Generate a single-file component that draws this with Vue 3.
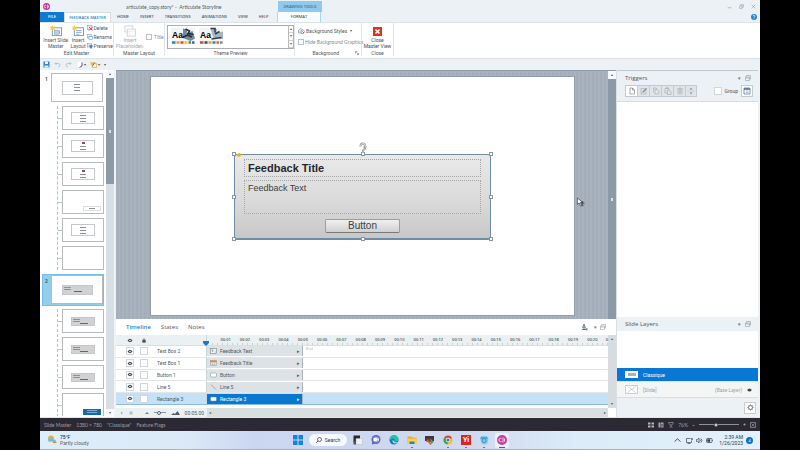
<script setup>
import { ref } from 'vue'

const menuTabs = ['HOME', 'INSERT', 'TRANSITIONS', 'ANIMATIONS', 'VIEW', 'HELP']
const masters = [
  { number: 1, selected: false, kind: 'form', layouts: ['form', 'mark', 'mark', 'corner', 'form', 'blank'] },
  { number: 2, selected: true, kind: 'grey', layouts: ['grey', 'grey', 'grey', 'blue'] },
]
const objects = [
  { name: 'Text Box 2', label: 'Feedback Text', icon: 'text' },
  { name: 'Text Box 1', label: 'Feedback Title', icon: 'title' },
  { name: 'Button 1', label: 'Button', icon: 'box' },
  { name: 'Line 5', label: 'Line 5', icon: 'line' },
  { name: 'Rectangle 3', label: 'Rectangle 3', icon: 'box', selected: true },
]
const seconds = Array.from({ length: 20 }, (_, i) => '00:' + String(i + 1).padStart(2, '0'))
const triggerTools = ['new', 'edit', 'copy', 'paste', 'delete', 'move']
const handles = ['nw', 'n', 'ne', 'w', 'e', 'sw', 's', 'se']
const hideGraphics = ref(false)
const titleOn = ref(false)
const grouped = ref(false)
const zoom = ref(42)
const scale = ref(40)
</script>

<template>
  <div class="desktop">
    <div class="app">
      <header class="top">
        <div class="titlebar">
          <svg class="logo" viewBox="0 0 14 14"><circle cx="7" cy="7" r="7" fill="#c7369b" /><path d="M6 4.500a2.600 2.600 0 1 0 0 5M9 3v8M11 5v4" fill="none" stroke="#fff" stroke-width="1.300" /></svg>
          <h1>articulate_copy.story* -&nbsp; Articulate Storyline</h1>
          <span class="tools-title">DRAWING TOOLS</span>
          <div class="window-buttons">
            <button aria-label="Minimize"><svg viewBox="0 0 8 8"><path d="M1 6h6" /></svg></button>
            <button aria-label="Restore"><svg viewBox="0 0 8 8"><path d="M1 3h4v4H1zM3 3V1h4v4H5" /></svg></button>
            <button aria-label="Close"><svg viewBox="0 0 8 8"><path d="M1 1l6 6M7 1L1 7" /></svg></button>
          </div>
        </div>
        <nav class="menu">
          <button class="file">FILE</button>
          <button class="active">FEEDBACK MASTER</button>
          <div class="menu-tabs"><button v-for="t in menuTabs" :key="t">{{ t }}</button></div>
          <button class="format">FORMAT</button>
          <button class="help" aria-label="Help"><svg viewBox="0 0 12 12"><circle cx="6" cy="6" r="6" fill="#2383d5" /><path d="M4 4.500q0-2 2-2t2 2q0 1-2 2v1M6 8.500v1.500" fill="none" stroke="#fff" stroke-width="1.300" /></svg></button>
        </nav>
      </header>

      <section class="ribbon">
        <div class="group edit">
          <div class="tools">
            <button class="big">
              <svg viewBox="0 0 28 26"><rect x="6" y="6" width="20" height="17" fill="#fff" stroke="#7b95a9" stroke-width="2" /><rect x="10" y="11" width="12" height="9" fill="#b8cfe0" stroke="#7893a8" /><path d="M6 0l2 4 4-1-2 4 2 4-4-1-2 3-1-3-4 1 2-4-2-4 4 1z" fill="#f4cc3b" /></svg>
              <span>Insert Slide<br>Master</span>
            </button>
            <button class="big">
              <svg viewBox="0 0 28 26"><rect x="6" y="6" width="20" height="17" fill="#fff" stroke="#7b95a9" stroke-width="2" /><path d="M10 12h12M10 16h12M10 20h7" stroke="#8fabc0" stroke-width="2" /><path d="M6 0l2 4 4-1-2 4 2 4-4-1-2 3-1-3-4 1 2-4-2-4 4 1z" fill="#f4cc3b" /></svg>
              <span>Insert<br>Layout</span>
            </button>
            <div class="stack">
              <button><svg viewBox="0 0 12 12"><rect x="1" y="1" width="9" height="8" fill="#e2ebf2" stroke="#7893a8" /><path d="M4 4l7 7M11 4l-7 7" stroke="#e23b35" stroke-width="2" /></svg>Delete</button>
              <button><svg viewBox="0 0 12 12"><rect x="1" y="1" width="8" height="7" fill="#e2ebf2" stroke="#7893a8" /><rect x="4" y="5" width="7" height="6" fill="#fff" stroke="#4d82b7" /></svg>Rename</button>
              <button><svg viewBox="0 0 12 12"><rect x="1" y="1" width="8" height="7" fill="#e2ebf2" stroke="#7893a8" /><path d="M5 4h6v4l-3 4-3-4z" fill="#4384c3" /></svg>Preserve</button>
            </div>
          </div>
          <h2>Edit Master</h2>
        </div>
        <div class="group placeholder">
          <div class="tools">
            <button class="big muted">
              <svg viewBox="0 0 28 26"><rect x="3" y="2" width="17" height="13" fill="#fff" stroke="#d0d4d7" stroke-width="2" /><rect x="8" y="9" width="18" height="15" fill="#fff" stroke="#d0d4d7" stroke-width="2" /><path d="M8 14h18M14 14v10" stroke="#dde0e2" /></svg>
              <span>Insert<br>Placeholder<i>▾</i></span>
            </button>
            <label class="check"><input v-model="titleOn" type="checkbox">Title</label>
          </div>
          <h2>Master Layout</h2>
        </div>
        <div class="group theme">
          <div class="gallery">
            <svg viewBox="0 0 50 38"><path d="M0 1h48v34H0z" fill="#f4f4f3" /><path d="M24 3l9 3-2 7 12-5 5 15-9 5-15-6z" fill="#7188a0" /><path d="M29 4l8 4-3 5 11 2M23 21l10-5 9 4" stroke="#232a32" stroke-width="3" fill="none" /><path d="M2 31h7" stroke="#2e88ac" stroke-width="5" /><path d="M11 31h6" stroke="#eb9c2c" stroke-width="5" /><path d="M19 31h6" stroke="#d54e35" stroke-width="5" /><path d="M27 31h6" stroke="#efc338" stroke-width="5" /><path d="M35 31h5" stroke="#538e48" stroke-width="5" /><path d="M42 31h5" stroke="#3868ac" stroke-width="5" /><text x="2" y="21" font-size="17" font-weight="700">Aa</text></svg>
            <svg viewBox="0 0 50 38"><path d="M0 1h48v34H0z" fill="#f4f4f3" /><path d="M23 3l13 1-1 8 13-3v15l-19-2z" fill="#a4b5c4" /><path d="M23 3h9v8M32 14l9-5M25 24l20-3" stroke="#353d48" stroke-width="3" fill="none" /><path d="M2 31h7" stroke="#d1493a" stroke-width="5" /><path d="M11 31h6" stroke="#374b63" stroke-width="5" /><path d="M19 31h6" stroke="#e7a43a" stroke-width="5" /><path d="M27 31h6" stroke="#3b84bb" stroke-width="5" /><path d="M35 31h5" stroke="#e0682f" stroke-width="5" /><path d="M42 31h5" stroke="#6d92b7" stroke-width="5" /><text x="2" y="21" font-size="17" font-weight="700">Aa</text></svg>
            <div class="spinner"><button aria-label="Previous themes">▴</button><button aria-label="Next themes">▾</button><button aria-label="More themes">▾</button></div>
          </div>
          <h2>Theme Preview</h2>
        </div>
        <div class="group background">
          <div class="lines">
            <button><svg viewBox="0 0 14 12"><path d="M1 4l4-3 4 3v6H1z" fill="#dde9f1" stroke="#5c7990" /><path d="M6 6l4-3 3 4-2 4H7z" fill="#fff" stroke="#4e6678" /><path d="M9 7l3 3" stroke="#318ed0" stroke-width="2" /></svg>Background Styles <i>▾</i></button>
            <label class="check"><input v-model="hideGraphics" type="checkbox">Hide Background Graphics</label>
          </div>
          <h2>Background <svg class="corner" viewBox="0 0 8 8"><path d="M1 5V1h4M3 3l4 4M7 4v3H4" fill="none" stroke="#555" /></svg></h2>
        </div>
        <div class="group close">
          <button class="big">
            <svg viewBox="0 0 18 18"><rect width="18" height="18" fill="#dc3417" /><path d="M5 5l8 8M13 5l-8 8" stroke="#fff" stroke-width="3" /></svg>
            <span>Close<br>Master View</span>
          </button>
          <h2>Close</h2>
        </div>
      </section>

      <div class="quick">
        <button aria-label="Save"><svg viewBox="0 0 14 14"><path d="M1 1h12v12H1z" fill="#2c83cb" /><path d="M4 1h6v5H4zM3 9h8v4H3z" fill="#e9f3fa" /></svg></button>
        <button aria-label="Undo"><svg viewBox="0 0 14 14"><path d="M5 2L2 5l3 3M2 5h6q4 0 4 3.500T8 12" fill="none" stroke="#aeb9c1" stroke-width="1.500" /></svg></button>
        <button aria-label="Redo"><svg viewBox="0 0 14 14"><path d="M9 2l3 3-3 3M12 5H6Q2 5 2 8.500T6 12" fill="none" stroke="#aeb9c1" stroke-width="1.500" /></svg></button>
        <button aria-label="Preview"><svg viewBox="0 0 14 14"><path d="M3 2h8v10H3z" fill="#fff" /><path d="M12 3v7l-5 3" fill="none" stroke="#52606a" stroke-width="2" /></svg></button>
        <i>▾</i>
        <button aria-label="Format"><svg viewBox="0 0 14 14"><path d="M1 2h8v6H1z" fill="#f5c64e" /><path d="M5 5h8v8H5z" fill="#fff4cd" stroke="#b99539" /><path d="M4 11l6-8" stroke="#5888b3" stroke-width="2" /></svg></button>
        <i>▾</i><i class="more">▾</i>
      </div>

      <main class="workspace">
        <aside class="masters">
          <div class="thumbs">
            <section v-for="m in masters" :key="m.number" class="master" :class="{ selected: m.selected }">
              <button class="lead" :aria-label="'Slide master ' + m.number">
                <b>{{ m.number }}</b>
                <span class="thumb wide"><span class="mini" :class="m.kind"><i></i><i></i><i></i></span></span>
              </button>
              <div class="layouts">
                <button v-for="(kind, i) in m.layouts" :key="i" class="thumb" :aria-label="'Layout ' + (i + 1)">
                  <span class="mini" :class="kind"><i></i><i></i><i></i></span>
                </button>
              </div>
            </section>
          </div>
          <div class="rail"><button aria-label="Scroll up">▴</button><span class="grip"><i></i></span><span class="track"></span><button aria-label="Scroll down">▾</button></div>
        </aside>

        <div class="center">
          <div class="stage">
            <div class="backdrop">
              <div class="slide">
                <div class="card">
                  <h3 class="field">Feedback Title</h3>
                  <p class="field">Feedback Text</p>
                  <button>Button</button>
                  <span v-for="h in handles" :key="h" class="handle" :class="h"></span>
                  <span class="adjust"></span>
                  <svg class="rotate" viewBox="0 0 16 22"><path d="M8 22v-5q5-3 5-8Q12 4 8 3 3 3 3 9" fill="none" stroke="#858b90" stroke-width="4" /><path d="M8 22v-5q5-3 5-8Q12 4 8 3 3 3 3 9" fill="none" stroke="#fff" stroke-width="1.500" /><path d="M8 10h4v4" fill="none" stroke="#858b90" stroke-width="1.500" /></svg>
                </div>
              </div>
              <svg class="cursor" viewBox="0 0 20 22"><path d="M3 1v14l4-3 3 7 3-1-3-7h5z" fill="#fff" stroke="#30363c" stroke-width="1.500" /><path d="M10 13h9M14.500 9v9M12 11l2.500-3 2.500 3M12 16l2.500 3 2.500-3" stroke="#30363c" fill="none" stroke-width="1.300" /></svg>
            </div>
            <div class="stage-rail"><button aria-label="Scroll slide up">▴</button><span><i></i></span></div>
          </div>

          <section class="timeline">
            <div class="panel-tabs">
              <button class="on">Timeline</button><button>States</button><button>Notes</button>
              <svg class="figure" viewBox="0 0 14 14"><circle cx="6" cy="2" r="2" fill="#60727f" /><path d="M6 4v7M2 6h8M2 11h9" stroke="#60727f" stroke-width="2" /><path d="M9 8h4v5H9z" fill="#8797a2" /></svg>
              <span class="drop">▾</span>
              <svg class="dock" viewBox="0 0 12 12"><path d="M1 4h8v7H1zM3 4V1h8v7H9M1 6h8" fill="none" stroke="#84909a" /></svg>
            </div>
            <div class="tracks">
              <div class="scale">
                <div class="names head">
                  <span class="cell-box"><svg viewBox="0 0 12 10"><path d="M1 5q5-7 10 0-5 7-10 0z" fill="#42484d" /><circle cx="6" cy="5" r="1.500" fill="#fff" /></svg></span>
                  <span class="cell-box"><svg viewBox="0 0 12 12"><path d="M2 5h8v6H2z" fill="#42484d" /><path d="M4 6V3q2-3 4 0v3" fill="none" stroke="#42484d" stroke-width="1.500" /></svg></span>
                </div>
                <div class="ruler">
                  <svg class="playhead" viewBox="0 0 12 10"><path d="M0 0h12v4L6 10 0 4z" fill="#1878cc" /></svg>
                  <span v-for="s in seconds" :key="s">{{ s }}</span><span class="last">0</span>
                </div>
              </div>
              <div class="rows">
                <div v-for="o in objects" :key="o.name" class="row" :class="{ picked: o.selected }">
                  <div class="names">
                    <button class="cell-box" :aria-label="'Show ' + o.name"><svg viewBox="0 0 12 10"><path d="M1 5q5-7 10 0-5 7-10 0z" fill="#42484d" /><circle cx="6" cy="5" r="1.500" fill="#fff" /></svg></button>
                    <input type="checkbox" class="cell-box" :aria-label="'Lock ' + o.name">
                    <span class="object">{{ o.name }}</span>
                  </div>
                  <div class="lane">
                    <div class="bar">
                      <svg viewBox="0 0 14 12">
                        <g v-if="o.icon === 'text'" fill="none" stroke="#67727a"><rect x="1" y="1" width="12" height="10" fill="#eef2f5" /><path d="M3 4h4M5 4v4M9 8h2" /></g>
                        <g v-else-if="o.icon === 'title'"><rect x="1" y="1" width="12" height="10" fill="#fff" stroke="#7d8c98" /><path d="M1 1h12v4H1z" fill="#df8a37" /><path d="M3 7h3M8 7h3M3 9h8" stroke="#6788a3" /></g>
                        <rect v-else-if="o.icon === 'box'" x="1" y="2" width="12" height="8" rx="2" fill="#fff" stroke="#6589a3" />
                        <path v-else d="M2 1l10 10" stroke="#5f6b74" />
                      </svg>
                      <span>{{ o.label }}</span><i>▸</i>
                    </div>
                    <small v-if="o.icon === 'text'">End</small>
                  </div>
                </div>
              </div>
              <div class="v-rail"><button aria-label="Scroll timeline up">▴</button><button aria-label="Scroll timeline down">▾</button></div>
            </div>
            <div class="transport">
              <div class="controls">
                <button aria-label="Play"><svg viewBox="0 0 8 8"><path d="M2 1l4 3-4 3z" fill="#a7b0b6" /></svg></button>
                <button aria-label="Stop"><svg viewBox="0 0 8 8"><path d="M1 1h6v6H1z" fill="#b7bec3" /></svg></button>
                <svg class="hill" viewBox="0 0 12 8"><path d="M0 8l6-5 6 5z" fill="#515a61" /></svg>
                <input v-model="scale" type="range" aria-label="Timeline scale">
                <svg class="hill tall" viewBox="0 0 18 8"><path d="M0 8l5-4 3 2 5-6 5 8z" fill="#515a61" /></svg>
                <time>00:05.00</time>
              </div>
              <div class="h-rail"><button aria-label="Scroll left">◂</button><button aria-label="Scroll right">▸</button></div>
              <span class="joint"></span>
            </div>
          </section>
        </div>

        <aside class="inspector">
          <div class="triggers-head">
            <div class="panel-title"><h2>Triggers</h2><span class="drop">▾</span><svg class="dock" viewBox="0 0 12 12"><path d="M1 4h8v7H1zM3 4V1h8v7H9M1 6h8" fill="none" stroke="#84909a" /></svg></div>
            <div class="trigger-bar">
              <div class="button-set">
                <button v-for="t in triggerTools" :key="t" :class="t" :aria-label="t + ' trigger'">
                  <svg viewBox="0 0 16 16">
                    <path v-if="t === 'new'" d="M4 2h5l4 4v8H4zM9 2v4h4" />
                    <g v-else-if="t === 'edit'"><path d="M9 3H2v11h10V8" /><path d="M5 11l1-3 6-6 2 2-6 6z" fill="#8d969c" /></g>
                    <path v-else-if="t === 'copy'" d="M3 11V2h5l2 2M6 5h4l4 3v6H6z" />
                    <path v-else-if="t === 'paste'" d="M6 12H2V3h8v2M5 3V1h3v2M7 6h3l4 3v6H7z" />
                    <path v-else-if="t === 'delete'" d="M2 4h12M4 4v10h8V4M6 4V2h4v2M7 6v6M9 6v6" />
                    <g v-else fill="#8d969c" stroke="none"><path d="M8 1l3 4H5zM8 15l3-4H5z" /><path d="M0 8h16" stroke="#b4bcc1" /></g>
                  </svg>
                </button>
              </div>
              <label class="check group-check"><input v-model="grouped" type="checkbox">Group</label>
              <button class="variables" aria-label="Variables"><svg viewBox="0 0 16 16"><path d="M2 2h12v12H2z" fill="#fff" stroke="#53779a" stroke-width="1.500" /><path d="M2 4h12" stroke="#3d6793" stroke-width="3" /><path d="M6 8h5M6 11h5" stroke="#53779a" /></svg></button>
            </div>
          </div>
          <div class="trigger-list"></div>
          <div class="panel-title layers-title"><h2>Slide Layers</h2><span class="drop">▾</span><svg class="dock" viewBox="0 0 12 12"><path d="M1 4h8v7H1zM3 4V1h8v7H9M1 6h8" fill="none" stroke="#84909a" /></svg></div>
          <div class="layer-list">
            <button class="layer current"><span class="layer-thumb"><i></i></span>Classique</button>
            <button class="layer base"><svg class="cross" viewBox="0 0 26 18"><path d="M1 1h24v16H1zM5 3l16 12M21 3L5 15" fill="#fff" stroke="#9da3a7" /></svg>[Slide]<em>(Base Layer)</em><svg class="eye" viewBox="0 0 12 10"><path d="M0 5q6-8 12 0-6 8-12 0z" fill="#3e4449" /></svg></button>
          </div>
          <div class="layer-foot"><button aria-label="Layer settings"><svg viewBox="0 0 14 14"><circle cx="7" cy="7" r="4" fill="none" stroke="#6b747a" stroke-width="2" /><path d="M7 1v2M7 11v2M1 7h2M11 7h2M3 3l1 1M10 10l1 1M11 3l-1 1M4 10l-1 1" stroke="#6b747a" stroke-width="2" /></svg></button></div>
        </aside>
      </main>

      <footer class="status">
        <span>Slide Master</span><span>1380 × 780</span><span>"Classique"</span><span>Feature Flags</span>
        <div class="view-tools">
          <svg viewBox="0 0 12 12"><path d="M0 1h5v4H0zM7 1h5v4H7zM0 7h5v4H0zM7 7h5v4H7z" fill="#b7b5bb" /></svg>
          <svg viewBox="0 0 12 12"><path d="M1 1h4v10H1zM6 1h5v10H6z" fill="#a7a5ac" /><path d="M7 4h2v5H7z" fill="#33303a" /></svg>
          <svg viewBox="0 0 12 12"><path d="M1 1h10L8 6H4zM6 6v4M3 10h6" fill="none" stroke="#908d97" stroke-width="1.500" /></svg>
          <span>76%</span>
          <button aria-label="Zoom out">−</button>
          <input v-model="zoom" type="range" aria-label="Zoom">
          <button aria-label="Zoom in">+</button>
          <svg viewBox="0 0 12 12"><path d="M1 1h10v10H1zM3 3l6 6M9 3L3 9" fill="none" stroke="#918e98" stroke-width="1.500" /></svg>
        </div>
      </footer>

      <footer class="taskbar">
        <div class="weather">
          <svg viewBox="0 0 20 20"><circle cx="8" cy="7" r="6" fill="#f1aa31" /><path d="M2 12q-2-4 3-5 5-4 8 2 6-1 5 4H4z" fill="#75bddf" /><path d="M11 14h8M12 14q1-4 4-1 4-1 3 3h-8z" fill="#ed8a3a" /></svg>
          <p><b>75°F</b><br>Partly cloudy</p>
        </div>
        <div class="launch">
          <button aria-label="Start"><svg viewBox="0 0 20 20"><path d="M0 0h9v9H0zM11 0h9v9h-9zM0 11h9v9H0zM11 11h9v9h-9z" fill="#1286d4" /></svg></button>
          <button class="search"><svg viewBox="0 0 12 12"><circle cx="7" cy="5" r="4" fill="none" stroke="#303942" stroke-width="1.500" /><path d="M4 8l-4 4" stroke="#303942" stroke-width="1.500" /></svg>Search</button>
          <button aria-label="Task view"><svg viewBox="0 0 20 20"><path d="M1 1h13v13H1z" fill="#28282d" /><path d="M6 7h13v12H6z" fill="#edf0f3" stroke="#b3bbc4" /><path d="M1 12h5v7H1z" fill="#505057" /></svg></button>
          <button aria-label="Chat"><svg viewBox="0 0 20 20"><circle cx="10" cy="9" r="9" fill="#5969c2" /><path d="M2 13v6l6-2" fill="#5969c2" /><circle cx="10" cy="9" r="6" fill="#b79fd0" /><rect x="5" y="6" width="7" height="6" rx="2" fill="#fff" /><path d="M12 8l4-2v6l-4-2z" fill="#f3dfee" /></svg></button>
          <button aria-label="Edge"><svg viewBox="0 0 20 20"><circle cx="10" cy="10" r="9" fill="#177abd" /><path d="M1 9a9 9 0 0 1 18 0q0 4-5 4-3 0-3-2 1-5-4-4-4 1-6 5z" fill="#28c1a2" /><path d="M7 10q-1 7 7 7 3 0 4-3-7 2-8-2z" fill="#a4e3f0" /></svg></button>
          <button class="open" aria-label="File Explorer"><svg viewBox="0 0 20 20"><path d="M1 3h7l2 2h9v13H1z" fill="#e7a926" /><path d="M1 7h18v11H1z" fill="#ffd04b" /><path d="M5 13h10v5H5z" fill="#2b81c0" /></svg></button>
          <button aria-label="Utility"><svg viewBox="0 0 20 20"><path d="M0 2h18v10H0z" fill="#373a3b" /><path d="M3 7h12v7H3z" fill="#913430" /><path d="M11 8l7 6-7 5z" fill="#39ae53" /><path d="M4 10l8 9" stroke="#e25b45" stroke-width="3" /></svg></button>
          <button class="open" aria-label="Chrome"><svg viewBox="0 0 20 20"><circle cx="10" cy="10" r="9" fill="#efbd31" /><path d="M10 10L2 6a9 9 0 0 1 16 0z" fill="#dc483b" /><path d="M10 10L2 6a9 9 0 0 0 7 13z" fill="#38a357" /><circle cx="10" cy="10" r="4.500" fill="#fff" /><circle cx="10" cy="10" r="3.200" fill="#3378cf" /></svg></button>
          <button class="open" aria-label="Yi"><span class="yi">Yi</span></button>
          <button class="open" aria-label="Recycle"><svg viewBox="0 0 20 20"><path d="M5 2h10l4 4-2 11q-7 4-12 0L2 6z" fill="#7dcaec" /><path d="M3 6h14" stroke="#278bc4" stroke-width="2" /><circle cx="10" cy="11" r="4" fill="none" stroke="#3b94c5" stroke-width="2" /></svg></button>
          <button class="running" aria-label="Storyline"><svg viewBox="0 0 20 20"><circle cx="10" cy="10" r="10" fill="#c83d9c" /><path d="M9 7a3.500 3.500 0 1 0 0 6M12 5v10M15 7v6" fill="none" stroke="#fff" stroke-width="1.500" /></svg></button>
        </div>
        <div class="tray">
          <svg viewBox="0 0 12 12"><path d="M1 8l5-5 5 5" fill="none" stroke="#303942" stroke-width="1.500" /></svg>
          <svg class="display" viewBox="0 0 14 12"><path d="M9 2H1v8h10V6M3 12h6" fill="none" stroke="#303942" stroke-width="1.300" /><circle cx="12" cy="3" r="2" fill="#596777" /></svg>
          <svg viewBox="0 0 14 12"><path d="M1 4h2l3-3v10L3 8H1zM8 4q2 2 0 4M10 2q4 4 0 8" fill="none" stroke="#303942" stroke-width="1.300" /></svg>
          <svg viewBox="0 0 14 12"><rect x="1" y="2" width="11" height="8" rx="2" fill="#fff" stroke="#303942" stroke-width="1.500" /><path d="M3 4h5v4H3zM13 5v2" fill="#303942" stroke="#303942" /></svg>
          <time>2:39 AM<br>1/26/2023</time><span class="badge">4</span>
        </div>
      </footer>
    </div>
  </div>
</template>

<style>
body { margin: 0; background: #000; }
</style>

<style scoped>
.desktop, .desktop * { box-sizing: border-box; }
.desktop { min-height: 100vh; padding: 0 40px 1px; display: flex; background: #000; font: 5px/6px Roboto, "Open Sans", sans-serif; color: #505960; }
.app { flex: 1; min-width: 0; display: flex; flex-direction: column; background: #ebf1f4; }
h1, h2, h3, p { margin: 0; font-size: inherit; font-weight: 400; }
button, input { margin: 0; padding: 0; border: 0; background: none; color: inherit; font: inherit; }
button { display: flex; align-items: center; justify-content: center; }
svg { display: block; flex: none; }
i { font-style: normal; }

.titlebar { display: flex; height: 12px; align-items: center; padding: 1px 0 0 3px; }
.logo { width: 7px; height: 7px; }
.titlebar h1 { width: 90px; margin-left: 76px; font: 5px/6px Lato, sans-serif; white-space: nowrap; }
.tools-title { align-self: flex-end; width: 44px; height: 11px; margin-left: 62px; background: #8fc9ee; color: #3d718f; font: 600 4px/12px "Open Sans", sans-serif; text-align: center; }
.window-buttons { display: flex; gap: 7px; margin-left: auto; padding-right: 4px; }
.window-buttons svg { width: 5px; height: 5px; fill: none; stroke: #98a1a7; }
.menu { display: flex; height: 10px; font: 600 4px/6px "Open Sans", sans-serif; }
.menu button { padding: 0 5px; white-space: nowrap; }
.menu-tabs { display: flex; gap: 1px; padding-left: 1px; }
.menu .file { width: 24px; background: #0d7ad0; color: #fff; }
.menu .active { width: 47px; padding: 0; background: #fff; border: 1px solid #d3dce1; border-bottom: 0; color: #1c7fc7; }
.menu .format { width: 44px; margin-left: auto; background: #f8fcfe; border: solid #acd6ef; border-width: 0 1px; }
.menu .help { width: 12px; margin-left: 427px; padding: 0; }
.menu .help svg { width: 6px; height: 6px; }

.ribbon { display: flex; height: 37px; background: #fff; border: solid #dce3e7; border-width: 1px 0; padding: 0 0 2px; }
.group { display: flex; flex-direction: column; justify-content: space-between; padding-top: 2px; border-right: 1px solid #e2e6e9; }
.group h2 { text-align: center; line-height: 6px; }
.edit { width: 74px; }
.placeholder { width: 51px; }
.theme { width: 130px; padding-left: 2px; }
.background { width: 67px; }
.close { width: 32px; }
.tools { display: flex; }
.big { flex-direction: column; text-align: center; white-space: nowrap; }
.edit .big:first-child { width: 32px; }
.edit .big { width: 13px; }
.big svg { width: 14px; height: 12px; }
.big.muted { width: 32px; color: #a2a8ac; }
.big i { font-size: 3px; line-height: 3px; }
.close .big svg { width: 9px; height: 9px; margin: 2px 0 1px; }
.close .big { color: #454b50; }
.stack { display: flex; flex-direction: column; gap: 3px; padding-left: 2px; }
.stack button { justify-content: flex-start; gap: 1px; height: 6px; }
.stack svg { width: 6px; height: 6px; }
.check { display: flex; align-items: center; gap: 2px; white-space: nowrap; color: #858d93; }
.check input { appearance: none; flex: none; width: 6px; height: 6px; border: 1px solid #b8c0c5; background: #fff; }
.gallery { display: flex; height: 24px; padding: 1px 0 0 3px; gap: 3px; border: 1px solid #a9adb0; }
.gallery > svg { width: 25px; height: 19px; font-family: "Liberation Sans", sans-serif; }
.spinner { display: flex; flex-direction: column; width: 5px; margin: -1px 0 0 auto; border-left: 1px solid #b6babd; }
.spinner button { flex: 1; border-bottom: 1px solid #d0d3d5; font-size: 4px; }
.lines { display: flex; flex-direction: column; gap: 5px; padding: 3px 0 0 3px; }
.lines button { justify-content: flex-start; gap: 1px; height: 6px; white-space: nowrap; }
.lines button svg { width: 7px; height: 6px; }
.lines button i { margin-left: 2px; font-size: 4px; }
.lines .check { gap: 1px; font-family: Lato, sans-serif; }
.background h2 { display: flex; justify-content: flex-end; gap: 16px; padding-right: 2px; }
.corner { width: 4px; height: 4px; align-self: center; }

.quick { height: 11px; display: flex; align-items: center; gap: 4px; padding-left: 3px; }
.quick svg { width: 7px; height: 7px; }
.quick i { margin-left: -3px; font-size: 4px; }
.quick .more { margin-left: 0; }

.workspace { flex: 1; min-height: 347px; display: flex; border-bottom: 1px solid #e1e7e9; }
.masters { width: 76px; display: flex; background: #fff; overflow: hidden; border-right: 2px solid #eff3f5; }
.thumbs { flex: 1; height: 346px; overflow: hidden; }
.master { padding: 0 2px 0 2px; }
.lead { width: 62px; height: 33px; align-items: flex-start; justify-content: flex-end; padding: 3px 1px 0 3px; }
.lead b { flex: 1; padding-top: 3px; text-align: left; }
.selected .lead { padding-top: 1px; background: #93ceef; outline: 1px solid #78bde5; outline-offset: -1px; height: 32px; }
.thumb { display: flex; align-items: center; justify-content: center; width: 42px; height: 24px; background: #fff; border: 1px solid #b5babd; position: relative; }
.thumb.wide { width: 52px; height: 29px; }
.layouts { display: flex; flex-direction: column; gap: 4px; margin: 3px 0 0 15px; padding-left: 4px; border-left: 1px dashed #b9bec1; }
.layouts .thumb::before { content: ""; position: absolute; left: -5px; top: 11px; width: 4px; border-top: 1px dashed #c0c4c7; }
.master + .master { margin-top: 4px; }
.mini { display: flex; flex-direction: column; align-items: center; justify-content: center; gap: 2px; width: 24px; height: 12px; border: 1px solid #c4c7c9; }
.mini i { width: 6px; height: 1px; background: #8d9194; }
.wide .mini { width: 31px; height: 14px; }
.mini.mark i:first-child { width: 3px; height: 2px; background: #80525b; }
.mini.corner { width: 18px; height: 5px; margin: 12px 0 0 18px; border-color: #ddd; }
.mini.corner i:not(:first-child), .mini.blank i { display: none; }
.mini.blank { border: 0; }
.mini.grey { height: 9px; align-items: flex-start; gap: 1px; padding-left: 1px; background: #d0d2d3; }
.mini.grey i { width: 7px; }
.mini.grey i:last-child { width: 8px; align-self: center; background: #63686b; }
.wide .mini.grey { height: 10px; }
.mini.blue { width: 18px; height: 6px; gap: 1px; margin: 13px 0 0 18px; background: #1869ac; border: 0; }
.mini.blue i { background: #75aed9; width: 10px; }
.mini.blue i:last-child { display: none; }
.rail { width: 8px; display: flex; flex-direction: column; background: #d7dfe5; }
.rail button { height: 8px; background: #f9fafb; font-size: 4px; }
.grip { height: 106px; background: #8a9aa6; display: grid; place-items: center; }
.grip i, .stage-rail i { width: 2px; height: 3px; background: #dce3e7; }
.track { flex: 1; }

.center { flex: 1; min-width: 0; display: flex; flex-direction: column; }
.stage { flex: 1; display: flex; min-height: 249px; background: #a8b3be; border-top: 1px solid #8f9ca8; }
.backdrop { flex: 1; position: relative; display: flex; padding: 5px 33px 3px 34px; background: repeating-linear-gradient(90deg, #a3aeba 0 2px, #a9b3be 2px 4px); }
.slide { flex: 1; position: relative; background: #fff; border: 1px solid #939da7; }
.card { position: absolute; left: 83px; right: 83px; top: 77px; height: 86px; display: flex; flex-direction: column; align-items: center; padding: 4px 9px 5px; border: 1px solid #6f8ca5; border-bottom-width: 2px; border-radius: 3px; background: linear-gradient(#e9e9e9, #dadada 55%, #c7c8c8); font: 9px/10px "Liberation Sans", sans-serif; color: #3c3e41; }
.field { width: 100%; border: 1px dotted #a4a6a8; padding: 2px 3px; }
h3.field { height: 18px; font-size: 11px; line-height: 12px; font-weight: 700; color: #26272c; }
p.field { height: 35px; margin-top: 3px; }
.card button { width: 75px; height: 14px; margin-top: 5px; border: 1px solid #9b9da0; border-bottom-color: #77797b; border-radius: 2px; background: linear-gradient(#f0f0f0, #d0d1d2); font-size: 10px; }
.handle { position: absolute; width: 4px; height: 4px; border: 1px solid #8c969d; background: #fff; }
.nw, .w, .sw { left: -3px; }
.ne, .e, .se { right: -3px; }
.n, .s { left: calc(50% - 2px); }
.nw, .n, .ne { top: -3px; }
.w, .e { top: 40px; }
.sw, .s, .se { bottom: -3px; }
.adjust { position: absolute; left: 2px; top: -2px; width: 4px; height: 4px; background: #e4b91b; border-radius: 2px; }
.rotate { position: absolute; left: calc(50% - 4px); top: -13px; width: 8px; height: 11px; }
.cursor { position: absolute; right: 23px; top: 126px; width: 9px; height: 11px; }
.stage-rail { width: 8px; display: flex; flex-direction: column; background: #8c9aa7; }
.stage-rail button { height: 8px; background: #f7f9fa; font-size: 4px; }
.stage-rail span { flex: 1; display: grid; place-items: center; }

.timeline { background: #fff; }
.panel-tabs { display: flex; height: 16px; align-items: center; gap: 10px; padding: 0 10px; font: 6px/8px "Open Sans", sans-serif; }
.panel-tabs .on { color: #1a82cf; font-weight: 600; }
.figure { width: 7px; height: 7px; margin-left: auto; }
.dock { width: 6px; height: 6px; }
.drop { font-size: 5px; color: #69747c; }
.panel-tabs .dock { margin-left: -7px; }
.panel-tabs .drop { margin-left: -4px; }
.tracks { display: grid; grid-template-columns: 1fr 8px; grid-template-rows: 11px 62px; }
.scale, .row { display: grid; grid-template-columns: 91px 1fr; min-width: 0; }
.scale { background: #ebf0f2; border-bottom: 1px solid #d9dfe2; }
.names { display: flex; align-items: center; gap: 6px; padding-left: 10px; border-right: 1px solid #cdd4d8; }
.cell-box { appearance: none; display: flex; align-items: center; justify-content: center; width: 8px; height: 8px; border: 1px solid #cfd5d8; background: #fff; }
.head .cell-box { border-color: transparent; background: none; }
.cell-box svg { width: 6px; height: 5px; }
.object { margin-left: 3px; white-space: nowrap; }
.ruler { position: relative; display: grid; grid-template-columns: repeat(20, 1fr) 6px; padding-left: 9px; font: 600 4px/9px "Open Sans", sans-serif; text-align: center; background: repeating-linear-gradient(90deg, #c9cfd3 0 1px, transparent 1px 5px) bottom / 100% 2px no-repeat; }
.ruler .last { text-align: right; }
.playhead { position: absolute; left: -4px; bottom: -1px; width: 6px; height: 5px; }
.v-rail { grid-row: 1 / 3; grid-column: 2; display: flex; flex-direction: column; justify-content: space-between; background: #d6dcdf; }
.v-rail button { height: 8px; font-size: 4px; }
.rows { display: grid; grid-template-rows: repeat(5, 1fr); padding-bottom: 3px; }
.row { border-bottom: 1px solid #e2e6e8; }
.row.picked { background: #c5e1f5; border-color: #8dbde0; }
.lane { display: flex; align-items: center; }
.bar { display: flex; align-items: center; width: 96px; height: 10px; padding: 0 2px 0 3px; background: #dce2e5; border-right: 1px solid #aab4ba; }
.picked .bar { background: #0878d0; color: #fff; }
.bar svg { width: 7px; height: 6px; margin-right: 3px; }
.bar i { margin-left: auto; }
.lane small { align-self: flex-start; margin-left: 3px; font-size: 4px; line-height: 6px; color: #b3b9bd; }
.transport { height: 9px; display: flex; background: #ebf0f2; }
.controls { width: 91px; display: flex; align-items: center; padding: 0 3px 0 4px; }
.controls button + button { margin-left: 5px; }
.controls button svg { width: 4px; height: 4px; }
.hill { width: 4px; height: 3px; margin-left: 12px; }
.hill.tall { width: 9px; height: 4px; margin-left: 5px; }
.controls time { margin-left: auto; }
.h-rail { flex: 1; display: flex; justify-content: space-between; align-items: center; background: #d9dedf; padding: 0 2px; font-size: 4px; }
.joint { width: 8px; background: #fff; }
input[type="range"] { appearance: none; height: 4px; background: linear-gradient(#8d9499, #8d9499) center / 100% 1px no-repeat; }
input[type="range"]::-webkit-slider-thumb { appearance: none; width: 4px; height: 4px; border: 1px solid #59636a; border-radius: 2px; background: #fff; }
.controls input { width: 12px; margin-left: 5px; }

.inspector { width: 144px; display: flex; flex-direction: column; padding: 0 2px 0 0; border-left: 1px solid #d9e0e4; font-size: 5px; }
.triggers-head { height: 32px; border-top: 1px solid #c1c9cf; border-bottom: 1px solid #d5dde1; }
.panel-title { display: flex; align-items: center; height: 14px; padding: 0 7px 0 8px; }
.panel-title h2 { flex: 1; font: 6px/8px "Open Sans", sans-serif; }
.panel-title .dock { margin-left: 4px; }
.trigger-bar { display: flex; align-items: center; padding: 0 5px 0 8px; }
.button-set { display: flex; border: 1px solid #c4cbd0; background: #dfe5e8; }
.button-set button { width: 12px; height: 10px; border-right: 1px solid #c4cbd0; }
.button-set button:last-child { border: 0; width: 10px; }
.button-set svg, .variables svg { width: 8px; height: 8px; fill: none; stroke: #949da3; }
.button-set .new { background: #fff; }
.button-set .new svg { stroke: #4e585f; }
.group-check { margin-left: auto; gap: 3px; color: #4e585f; }
.group-check input { width: 8px; height: 8px; border-color: #d0d6da; }
.variables { width: 12px; height: 12px; margin-left: 3px; border: 1px solid #c4cbd0; background: #fff; }
.trigger-list { flex: 1; background: #fff; }
.layers-title { height: 14px; }
.layer-list { height: 66px; display: flex; flex-direction: column; justify-content: flex-end; background: #fff; }
.layer { width: 100%; justify-content: flex-start; height: 15px; padding: 0 6px 0 8px; background: #f4f5f5; color: #9aa1a6; }
.layer.current { height: 14px; background: #0878d4; color: #fff; border-bottom: 1px solid #d9e5ed; }
.layer-thumb { width: 13px; height: 7px; margin-right: 5px; display: grid; place-items: center; background: #fff; }
.layer-thumb i { width: 8px; height: 3px; background: #afb1b2; }
.cross { width: 13px; height: 9px; margin-right: 5px; }
.layer em { margin-left: auto; }
.eye { width: 5px; height: 4px; margin-left: 5px; }
.layer-foot { height: 20px; display: flex; justify-content: flex-end; align-items: center; padding-right: 2px; border-top: 1px solid #d8dfe3; }
.layer-foot button { width: 12px; height: 12px; border: 1px solid #c6ccd0; background: #fff; }
.layer-foot svg { width: 7px; height: 7px; }

.status { height: 13px; display: flex; align-items: center; gap: 5px; padding: 0 4px; background: #2b2933; color: #a09da6; font-family: Lato, sans-serif; }
.view-tools { display: flex; align-items: center; gap: 4px; margin-left: auto; }
.view-tools svg { width: 6px; height: 6px; }
.view-tools button { width: 3px; color: #c6c4ca; }
.view-tools input { width: 40px; }
.taskbar { height: 19px; display: grid; grid-template-columns: 1fr auto 1fr; align-items: center; padding: 0 7px; border-bottom: 1px solid #a9b3bf; background: linear-gradient(90deg, #dceefa, #dceaf8 20%, #cbd6f1 30%, #cfdaef 60%, #dcecf8 75%, #e2f1fb); color: #31373e; }
.weather { display: flex; align-items: center; gap: 3px; }
.weather svg { width: 10px; height: 10px; }
.weather p { color: #59616a; }
.weather b { font-weight: 500; color: #31373e; }
.launch { display: flex; align-items: center; gap: 4px; }
.launch button { width: 14px; height: 15px; position: relative; border-radius: 2px; }
.launch button svg { width: 10px; height: 10px; }
.launch .search { width: 38px; height: 12px; gap: 3px; border-radius: 6px; background: #f6faff; }
.launch .search svg { width: 6px; height: 6px; }
.launch .running { background: #eaf0fb; }
.open::after, .running::after { content: ""; position: absolute; bottom: 0; width: 2px; height: 1px; background: #6f7780; }
.running::after { width: 6px; background: #1573bc; }
.yi { width: 10px; height: 10px; background: #d9242c; color: #fff; font-size: 7px; line-height: 10px; font-weight: 700; }
.tray { display: flex; align-items: center; justify-content: flex-end; gap: 3px; }
.tray svg { width: 7px; height: 7px; }
.tray .display { margin-left: 2px; }
.tray time { text-align: right; margin-left: 3px; }
.badge { width: 7px; height: 7px; border-radius: 4px; background: #0871c5; color: #fff; font-size: 4px; line-height: 7px; text-align: center; }
</style>
